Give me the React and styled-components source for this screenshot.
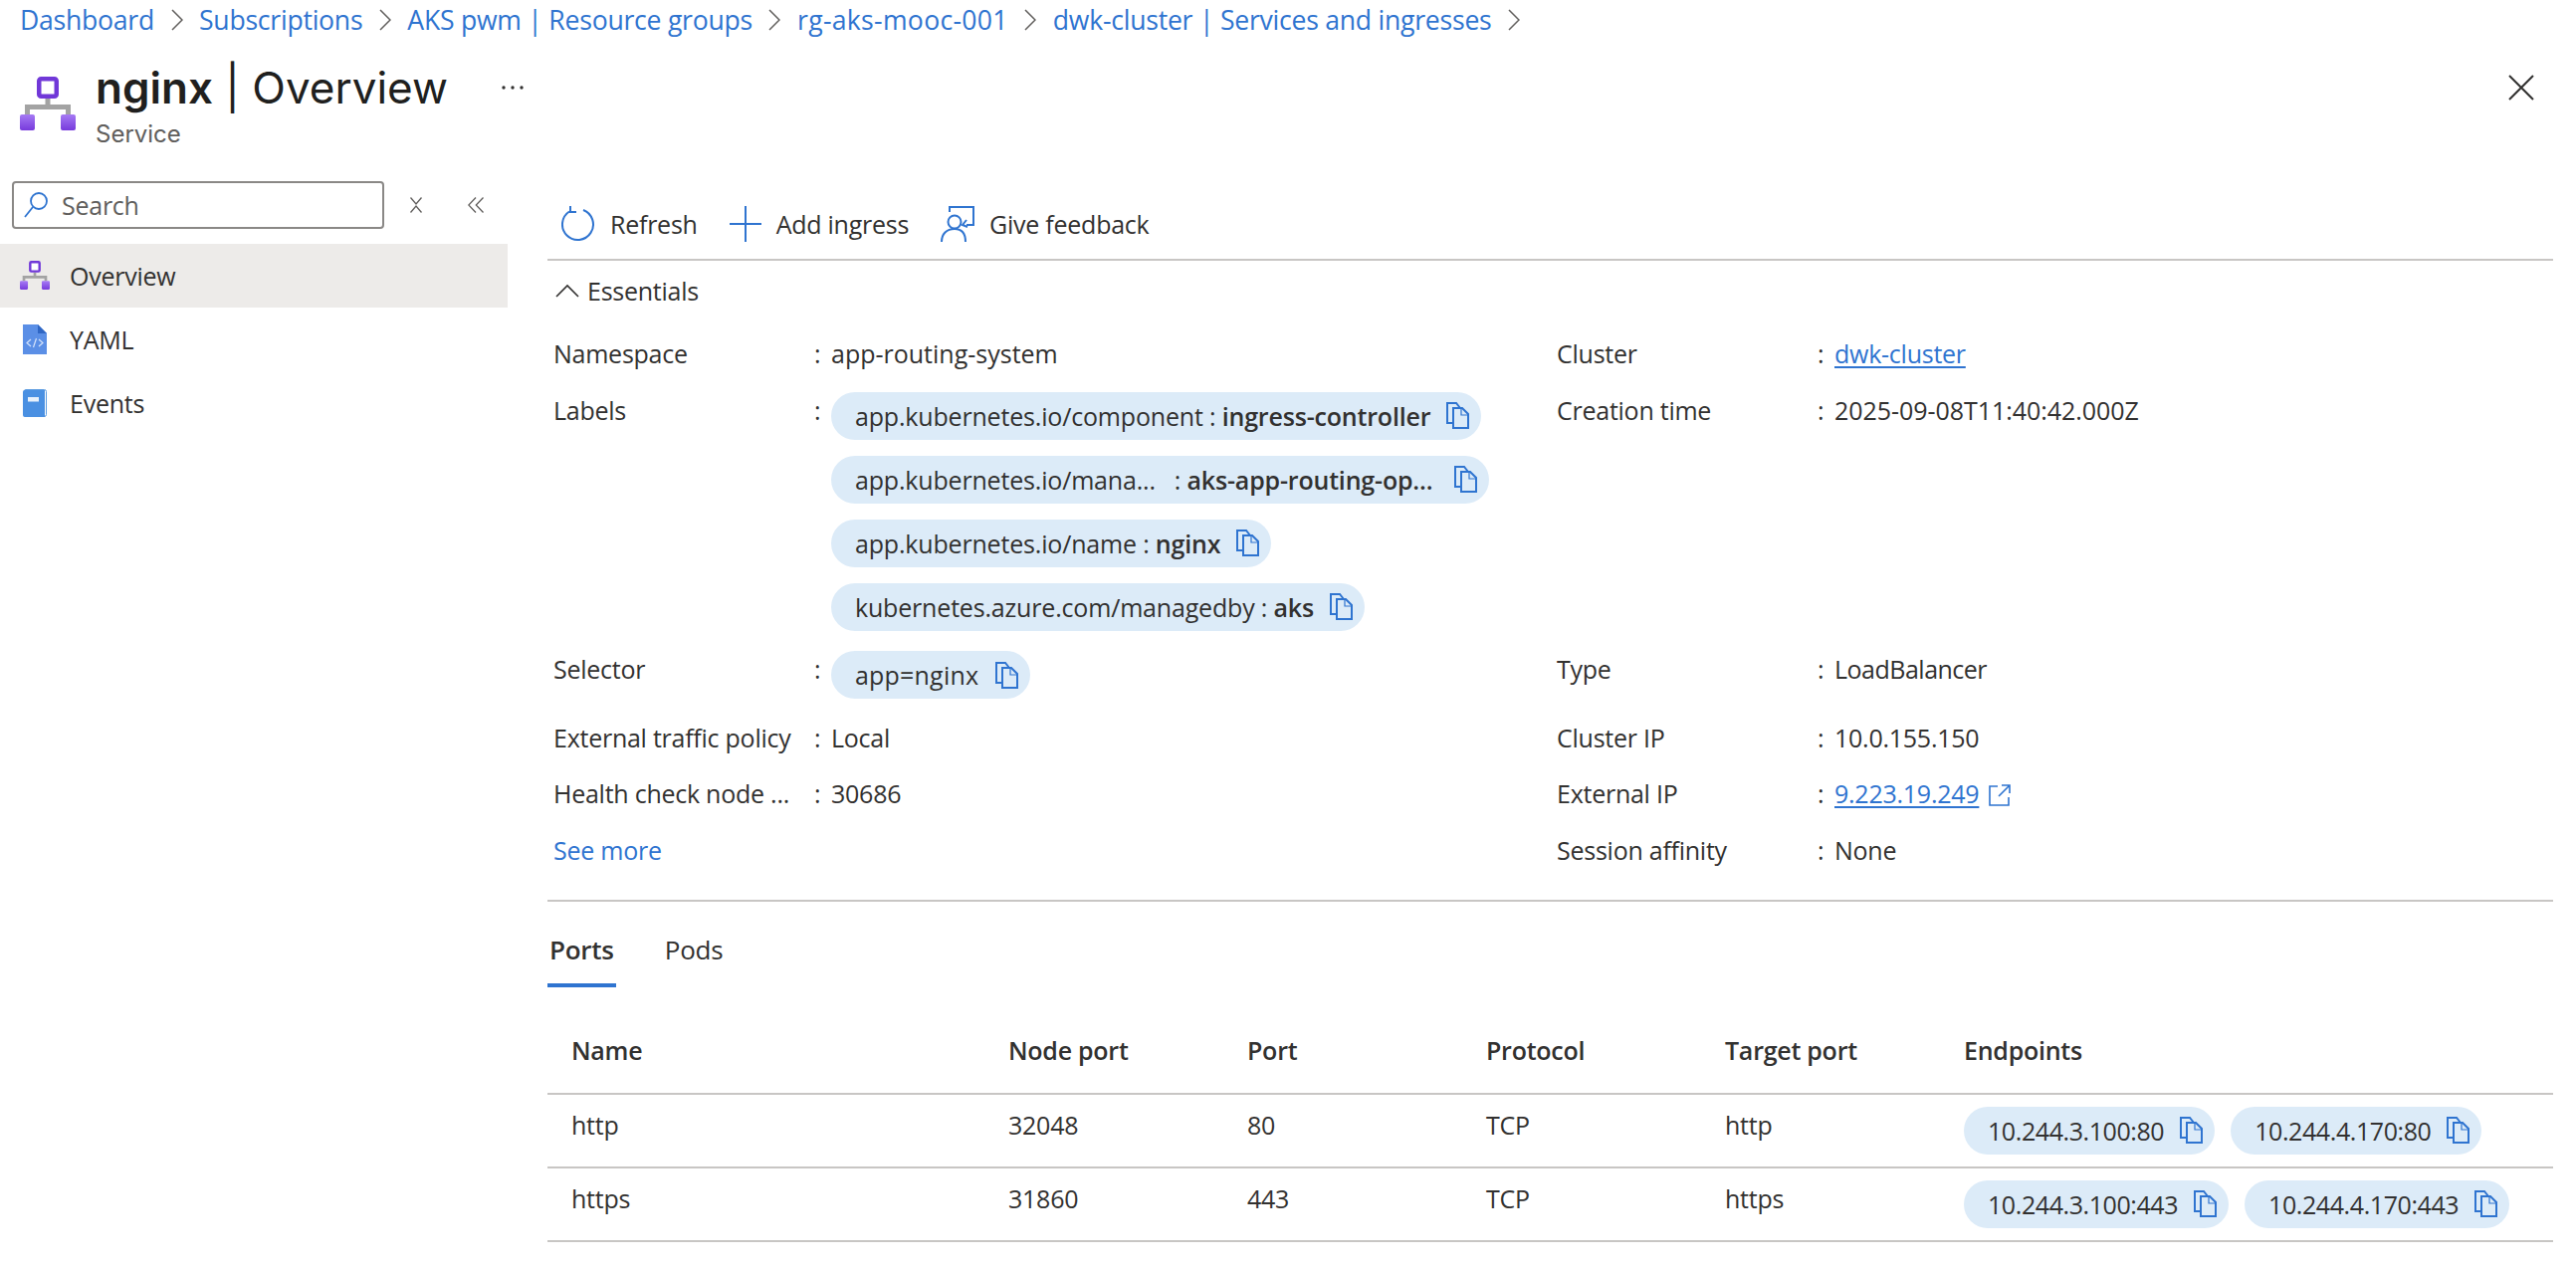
import styled, { createGlobalStyle } from "styled-components";

const GlobalStyle = createGlobalStyle`
  html, body { margin: 0; padding: 0; background: #fff; }
  body {
    font-family: "Open Sans", "Noto Sans", sans-serif;
    font-size: 25px;
    letter-spacing: -0.25px;
    color: #323130;
  }
`;

const BLUE = "#2f74d0";

const Page = styled.div`
  width: 2588px;
  height: 1274px;
  overflow: hidden;
`;

const Breadcrumbs = styled.nav`
  display: flex;
  align-items: center;
  height: 40px;
  padding-left: 20px;
  gap: 16.5px;
  font-size: 26.6px;
  color: ${BLUE};
`;

const Crumb = styled.span`
  letter-spacing: ${(p) => p.$spacing ?? -0.25}px;
`;

const Header = styled.header`
  display: flex;
  align-items: flex-start;
  height: 94px;
  padding: 18px 42px 0 20px;
`;

const HeaderIcon = styled.div`
  display: flex;
  margin-top: 19px;
`;

const TitleBlock = styled.div`
  margin: 2px 0 0 20px;
  font-family: Inter, sans-serif;
  letter-spacing: 0;
`;

const Title = styled.h1`
  margin: 0;
  font-size: 44px;
  line-height: 56px;
  font-weight: 400;
  color: #201f1e;
  b { font-weight: 600; }
`;

const Subtitle = styled.div`
  margin-top: 4px;
  font-size: 24px;
  line-height: 30px;
  color: #605e5c;
`;

const More = styled.span`
  display: flex;
  margin: 28px 0 0 54px;
`;

const CloseButton = styled.button`
  margin: 17px 0 0 auto;
  padding: 0;
  border: 0;
  background: none;
  display: flex;
`;

const Body = styled.div`
  display: flex;
`;

const Sidebar = styled.aside`
  width: 510px;
  flex: none;
  padding-top: 30px;
`;

const SearchRow = styled.div`
  display: flex;
  align-items: center;
  padding-left: 12px;
  margin-bottom: 15px;
`;

const SearchBox = styled.div`
  box-sizing: border-box;
  width: 374px;
  height: 48px;
  display: flex;
  align-items: center;
  gap: 14px;
  padding-left: 10px;
  border: 2px solid #8a8886;
  border-radius: 4px;
  color: #605e5c;
`;

const IconButton = styled.span`
  display: flex;
  margin-left: ${(p) => p.$gap}px;
`;

const NavItem = styled.div`
  height: 64px;
  display: flex;
  align-items: center;
  gap: 20px;
  padding-left: 20px;
  background: ${(p) => (p.$active ? "#edebe9" : "transparent")};
  color: #323130;
`;

const NavIcon = styled.span`
  width: 30px;
  display: flex;
  justify-content: center;
`;

const Main = styled.main`
  width: 2015px;
  margin-left: 40px;
  padding-top: 38px;
`;

const Toolbar = styled.div`
  display: flex;
  align-items: center;
  height: 70px;
  padding: 0 0 0 14px;
  border-bottom: 2px solid #c8c6c4;
`;

const ToolButton = styled.div`
  display: flex;
  align-items: center;
  gap: 15px;
  margin-right: 32px;
`;

const EssentialsToggle = styled.div`
  display: flex;
  align-items: center;
  gap: 8px;
  height: 60px;
  padding-left: 8px;
`;

const Essentials = styled.div`
  display: grid;
  grid-template-columns: 1008px 1fr;
  row-gap: 20.5px;
  padding: 15px 0 0 6px;
  line-height: 36px;
`;

const Field = styled.div`
  display: flex;
  align-items: flex-start;
`;

const FieldLabel = styled.div`
  width: 262px;
  flex: none;
  white-space: nowrap;
`;

const Colon = styled.div`
  width: 17px;
  flex: none;
`;

const FieldValue = styled.div`
  display: flex;
  flex-direction: column;
  align-items: flex-start;
  gap: 16px;
  letter-spacing: ${(p) => p.$spacing ?? -0.25}px;
`;

const Link = styled.a`
  color: ${BLUE};
  text-decoration: ${(p) => (p.$plain ? "none" : "underline")};
  text-underline-offset: 3px;
`;

const Pill = styled.div`
  display: inline-flex;
  align-items: center;
  height: 48px;
  padding: 0 12px 0 24px;
  gap: ${(p) => p.$gap || 16}px;
  border-radius: 24px;
  background: #dcebf8;
  letter-spacing: ${(p) => p.$spacing ?? -0.18}px;
  white-space: pre;
  b { font-weight: 600; }
`;

const Divider = styled.div`
  border-top: 2px solid #c8c6c4;
  margin-top: 32px;
`;

const Tabs = styled.div`
  display: flex;
  gap: 47px;
`;

const Tab = styled.div`
  box-sizing: border-box;
  height: 86px;
  padding: 30px 2px 0;
  line-height: 36px;
  font-size: 26px;
  border-bottom: ${(p) => (p.$active ? `4px solid ${BLUE}` : "none")};
  font-weight: ${(p) => (p.$active ? 600 : 400)};
`;

const Table = styled.div`
  display: grid;
  grid-template-columns: 439px 240px 240px 240px 240px 1fr;
  margin-top: 20px;
`;

const Cell = styled.div`
  box-sizing: border-box;
  display: flex;
  align-items: center;
  gap: 16px;
  height: ${(p) => (p.$head ? 88 : 74)}px;
  padding: 0 0 ${(p) => (p.$text ? 12 : 0)}px 24px;
  border-bottom: 2px solid #c8c6c4;
  font-weight: ${(p) => (p.$head ? 600 : 400)};
`;

const Chevron = () => (
  <svg width="12" height="22" viewBox="0 0 12 22" fill="none" stroke="#605e5c" strokeWidth="1.5">
    <path d="M1 1l10 10L1 21" />
  </svg>
);

const CopyIcon = () => (
  <svg width="23" height="27" viewBox="0 0 23 27" fill="none" stroke="#2f74d0" strokeWidth="2">
    <path d="M7 21H1V1h9l4 5" />
    <path d="M7 6h9l6 6v14H7z" />
    <path d="M15 6v7h7" strokeWidth="1.2" />
  </svg>
);

const ServiceIcon = ({ size }) => (
  <svg width={size} height={size} viewBox="0 0 56 56" fill="none">
    <defs>
      <linearGradient id={`node${size}`} x1="0" y1="0" x2="0" y2="1">
        <stop offset="0" stopColor="#a67af4" />
        <stop offset="1" stopColor="#773adc" />
      </linearGradient>
    </defs>
    <path d="M28 22v8M7.5 38v-7.5h41V38" stroke="#a3a3a3" strokeWidth="5" />
    <rect x="19.25" y="2.25" width="17.5" height="17.5" rx="2" stroke="#7138d8" strokeWidth="4.5" fill="#fff" />
    <rect x="0" y="38" width="15" height="16" rx="2" fill={`url(#node${size})`} />
    <rect x="41" y="38" width="15" height="16" rx="2" fill={`url(#node${size})`} />
  </svg>
);

const YamlIcon = () => (
  <svg width="24" height="30" viewBox="0 0 24 30">
    <path d="M0 0h15l9 9v21H0z" fill="#5b8fe6" />
    <path d="M15 0l9 9h-9z" fill="#2f66c4" />
    <path d="M8 15l-4 3.5L8 22M16 15l4 3.5-4 3.5M13.5 14l-3 9" fill="none" stroke="#d6e4fb" strokeWidth="1.2" />
  </svg>
);

const EventsIcon = () => (
  <svg width="24" height="28" viewBox="0 0 24 28">
    <rect x="1" y="0.5" width="22.5" height="27" rx="2" fill="#fff" stroke="#5b9be0" strokeWidth="1" />
    <path d="M0 3a2 2 0 0 1 2-2h20v27H2a2 2 0 0 1-2-2z" fill="#4a90e2" />
    <rect x="5" y="8" width="11" height="4.5" fill="#e8f1fb" />
  </svg>
);

const SearchIcon = () => (
  <svg width="24" height="26" viewBox="0 0 24 26" fill="none" stroke="#2f74d0" strokeWidth="1.8">
    <circle cx="15" cy="9" r="8" />
    <path d="M9 15L1 25" />
  </svg>
);

const CollapseAllIcon = () => (
  <svg width="12" height="16" viewBox="0 0 12 16" fill="none" stroke="#605e5c" strokeWidth="1.3">
    <path d="M0.5 0.5L6 7l5.5-6.5M0.5 15.5L6 9l5.5 6.5" />
  </svg>
);

const DoubleLeftIcon = () => (
  <svg width="16" height="16" viewBox="0 0 16 16" fill="none" stroke="#605e5c" strokeWidth="1.3">
    <path d="M8 0.5L0.8 8 8 15.5M15.5 0.5L8.3 8l7.2 7.5" />
  </svg>
);

const DotsIcon = () => (
  <svg width="22" height="4" viewBox="0 0 22 4" fill="#323130">
    <circle cx="2" cy="2" r="1.7" />
    <circle cx="11" cy="2" r="1.7" />
    <circle cx="20" cy="2" r="1.7" />
  </svg>
);

const RefreshIcon = () => (
  <svg width="34" height="36" viewBox="0 0 34 36" fill="none" stroke="#2f74d0" strokeWidth="2">
    <path d="M22 4a15.5 15.5 0 1 1-14 1.5" />
    <path d="M9 0v6h6" />
  </svg>
);

const PlusIcon = () => (
  <svg width="32" height="36" viewBox="0 0 32 36" stroke="#2f74d0" strokeWidth="2">
    <path d="M16 0v36M0 18h32" />
  </svg>
);

const FeedbackIcon = () => (
  <svg width="34" height="36" viewBox="0 0 34 36" fill="none" stroke="#2f74d0" strokeWidth="2">
    <path d="M9 6V1h24v18h-7" />
    <path d="M26 14l-4 5 5 2" />
    <circle cx="14" cy="16" r="6.5" />
    <path d="M1 36c0-8 5-13 13-13s11 5 11 13" />
  </svg>
);

const CloseIcon = () => (
  <svg width="26" height="26" viewBox="0 0 26 26" stroke="#323130" strokeWidth="2">
    <path d="M1 1l24 24M25 1L1 25" />
  </svg>
);

const ChevronUpIcon = () => (
  <svg width="24" height="14" viewBox="0 0 24 14" fill="none" stroke="#323130" strokeWidth="1.6">
    <path d="M1 13L12 2l11 11" />
  </svg>
);

const ExternalIcon = () => (
  <svg width="22" height="22" viewBox="0 0 22 22" fill="none" stroke="#2f74d0" strokeWidth="1.6" style={{ marginLeft: 10, verticalAlign: -3 }}>
    <path d="M9 2H1v19h19v-8M13 1h8v8M21 1L10 12" />
  </svg>
);

const crumbs = [
  ["Dashboard"],
  ["Subscriptions"],
  ["AKS pwm | Resource groups"],
  ["rg-aks-mooc-001", 0.3],
  ["dwk-cluster | Services and ingresses"],
];

const labels = [
  ["app.kubernetes.io/component : ", "ingress-controller"],
  ["app.kubernetes.io/mana...   : ", "aks-app-routing-op...", 22],
  ["app.kubernetes.io/name : ", "nginx"],
  ["kubernetes.azure.com/managedby : ", "aks"],
];

const ports = [
  ["http", "32048", "80", "TCP", "http", ["10.244.3.100:80", "10.244.4.170:80"]],
  ["https", "31860", "443", "TCP", "https", ["10.244.3.100:443", "10.244.4.170:443"]],
];

const columns = ["Name", "Node port", "Port", "Protocol", "Target port", "Endpoints"];

const EssentialField = ({ label, spacing, children }) => (
  <Field>
    <FieldLabel>{label}</FieldLabel>
    <Colon>:</Colon>
    <FieldValue $spacing={spacing}>{children}</FieldValue>
  </Field>
);

const App = () => (
  <Page>
    <GlobalStyle />
    <Breadcrumbs>
      {crumbs.map(([c, spacing]) => [
        <Crumb key={c} $spacing={spacing}>{c}</Crumb>,
        <Chevron key={`${c}-sep`} />,
      ])}
    </Breadcrumbs>
    <Header>
      <HeaderIcon>
        <ServiceIcon size={56} />
      </HeaderIcon>
      <TitleBlock>
        <Title>
          <b>nginx</b> | Overview
        </Title>
        <Subtitle>Service</Subtitle>
      </TitleBlock>
      <More>
        <DotsIcon />
      </More>
      <CloseButton>
        <CloseIcon />
      </CloseButton>
    </Header>
    <Body>
      <Sidebar>
        <SearchRow>
          <SearchBox>
            <SearchIcon />
            Search
          </SearchBox>
          <IconButton $gap={26}>
            <CollapseAllIcon />
          </IconButton>
          <IconButton $gap={46}>
            <DoubleLeftIcon />
          </IconButton>
        </SearchRow>
        <NavItem $active>
          <NavIcon>
            <ServiceIcon size={30} />
          </NavIcon>
          Overview
        </NavItem>
        <NavItem>
          <NavIcon>
            <YamlIcon />
          </NavIcon>
          YAML
        </NavItem>
        <NavItem>
          <NavIcon>
            <EventsIcon />
          </NavIcon>
          Events
        </NavItem>
      </Sidebar>
      <Main>
        <Toolbar>
          <ToolButton>
            <RefreshIcon />
            Refresh
          </ToolButton>
          <ToolButton>
            <PlusIcon />
            Add ingress
          </ToolButton>
          <ToolButton>
            <FeedbackIcon />
            Give feedback
          </ToolButton>
        </Toolbar>
        <EssentialsToggle>
          <ChevronUpIcon />
          Essentials
        </EssentialsToggle>
        <Essentials>
          <EssentialField label="Namespace" spacing={0}>app-routing-system</EssentialField>
          <EssentialField label="Cluster">
            <Link>dwk-cluster</Link>
          </EssentialField>
          <EssentialField label="Labels">
            {labels.map(([k, v, gap]) => (
              <Pill key={k} $gap={gap}>
                <span>
                  {k}
                  <b>{v}</b>
                </span>
                <CopyIcon />
              </Pill>
            ))}
          </EssentialField>
          <EssentialField label="Creation time" spacing={-0.05}>2025-09-08T11:40:42.000Z</EssentialField>
          <EssentialField label="Selector">
            <Pill $gap={17} $spacing={0.2}>
              app=nginx
              <CopyIcon />
            </Pill>
          </EssentialField>
          <EssentialField label="Type" spacing={-0.5}>LoadBalancer</EssentialField>
          <EssentialField label="External traffic policy">Local</EssentialField>
          <EssentialField label="Cluster IP">10.0.155.150</EssentialField>
          <EssentialField label="Health check node ...">30686</EssentialField>
          <EssentialField label="External IP">
            <span>
              <Link>9.223.19.249</Link>
              <ExternalIcon />
            </span>
          </EssentialField>
          <Link $plain>See more</Link>
          <EssentialField label="Session affinity">None</EssentialField>
        </Essentials>
        <Divider />
        <Tabs>
          <Tab $active>Ports</Tab>
          <Tab>Pods</Tab>
        </Tabs>
        <Table>
          {columns.map((c) => (
            <Cell key={c} $head>
              {c}
            </Cell>
          ))}
          {ports.map((row) =>
            row.map((v, i) =>
              Array.isArray(v) ? (
                <Cell key={`${row[0]}-${i}`}>
                  {v.map((ip) => (
                    <Pill key={ip} $spacing={-0.42}>
                      {ip}
                      <CopyIcon />
                    </Pill>
                  ))}
                </Cell>
              ) : (
                <Cell key={`${row[0]}-${i}`} $text>
                  {v}
                </Cell>
              )
            )
          )}
        </Table>
      </Main>
    </Body>
  </Page>
);

export default App;
